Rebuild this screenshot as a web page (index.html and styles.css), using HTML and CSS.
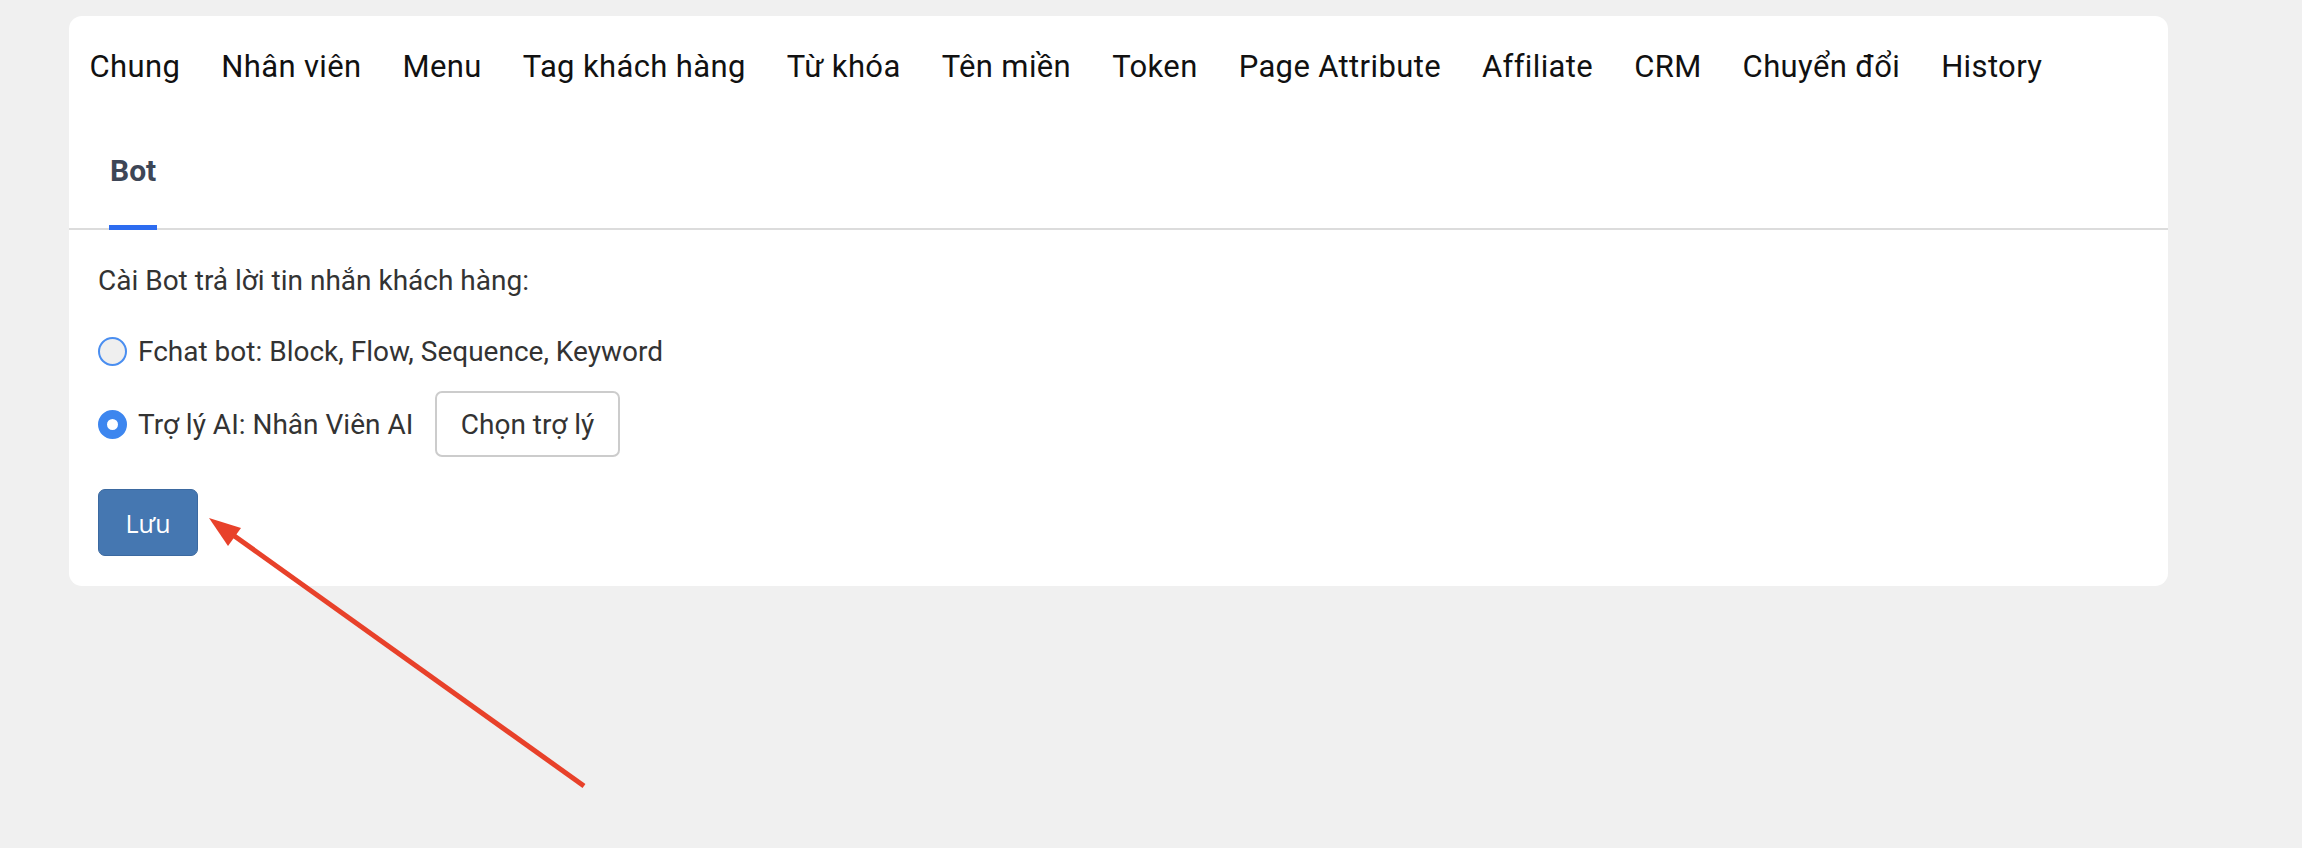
FILE: index.html
```html
<!DOCTYPE html>
<html lang="vi">
<head>
<meta charset="utf-8">
<title>Cài đặt Bot</title>
<link rel="stylesheet" href="styles.css">
</head>
<body>
<div class="page">
  <div class="card">
    <nav class="tabs">
      <a class="tab">Chung</a>
      <a class="tab">Nhân viên</a>
      <a class="tab">Menu</a>
      <a class="tab">Tag khách hàng</a>
      <a class="tab">Từ khóa</a>
      <a class="tab">Tên miền</a>
      <a class="tab">Token</a>
      <a class="tab">Page Attribute</a>
      <a class="tab">Affiliate</a>
      <a class="tab">CRM</a>
      <a class="tab">Chuyển đổi</a>
      <a class="tab">History</a>
    </nav>
    <div class="subtabs">
      <a class="subtab active">Bot</a>
    </div>
    <div class="content">
      <p class="lead">Cài Bot trả lời tin nhắn khách hàng:</p>
      <label class="option">
        <input type="radio" name="bot" class="radio">
        <span class="option-text">Fchat bot: Block, Flow, Sequence, Keyword</span>
      </label>
      <label class="option">
        <input type="radio" name="bot" class="radio" checked>
        <span class="option-text">Trợ lý AI: Nhân Viên AI</span>
        <button type="button" class="btn-outline">Chọn trợ lý</button>
      </label>
      <button type="button" class="btn-save">Lưu</button>
    </div>
  </div>
</div>
<svg class="arrow" width="2302" height="848" viewBox="0 0 2302 848">
  <line x1="584" y1="786" x2="233" y2="535" stroke="#e8412a" stroke-width="5"/>
  <polygon points="209,518 241,528 228,546" fill="#e8412a"/>
</svg>
</body>
</html>
```
FILE: styles.css
```css
html, body {
  margin: 0;
  padding: 0;
}
body {
  background: #f0f0f0;
  font-family: Roboto, "Liberation Sans", sans-serif;
  min-height: 848px;
  position: relative;
}
.page {
  padding: 16px 0 0 69px;
}
.card {
  width: 2099px;
  background: #ffffff;
  border-radius: 13px;
}
.tabs {
  display: flex;
  height: 100px;
  align-items: center;
}
.tab {
  padding: 0 20.5px;
  font-size: 31px;
  color: #111111;
  letter-spacing: 0.37px;
  white-space: nowrap;
}
.subtabs {
  display: flex;
  height: 114px;
  box-sizing: border-box;
  border-bottom: 2px solid #dcdcdc;
  padding-left: 40px;
}
.subtab {
  display: flex;
  align-items: center;
  padding: 0 1px;
  margin-bottom: -2px;
  font-size: 30px;
  font-weight: 700;
  color: #3d4656;
}
.subtab.active {
  border-bottom: 5px solid #2d6cf0;
}
.content {
  padding: 0 29px 30px;
}
.lead {
  margin: 34px 0 20px;
  line-height: 34px;
  font-size: 28px;
  color: #333333;
}
.option {
  display: flex;
  align-items: center;
  height: 66px;
}
.option + .option {
  margin-top: 7px;
}
.radio {
  appearance: none;
  -webkit-appearance: none;
  margin: 0 11px 0 0;
  width: 29px;
  height: 29px;
  box-sizing: border-box;
  border: 2px solid #4a8ef0;
  border-radius: 50%;
  background: #efefef;
}
.radio:checked {
  border: 9px solid #3d86ef;
  background: #ffffff;
}
.option-text {
  font-size: 28px;
  color: #333333;
}
.btn-outline {
  margin-left: 22px;
  height: 66px;
  padding: 0 23.5px;
  background: #ffffff;
  border: 2px solid #cccccc;
  border-radius: 7px;
  font-family: Roboto, "Liberation Sans", sans-serif;
  font-size: 28px;
  color: #333333;
}
.btn-save {
  display: block;
  margin-top: 32px;
  width: 100px;
  height: 67px;
  background: #4577b1;
  border: 1px solid #3b69a0;
  border-radius: 7px;
  color: #ffffff;
  font-family: "Open Sans", "Liberation Sans", sans-serif;
  font-size: 25px;
}
.arrow {
  position: absolute;
  left: 0;
  top: 0;
  pointer-events: none;
}
```
